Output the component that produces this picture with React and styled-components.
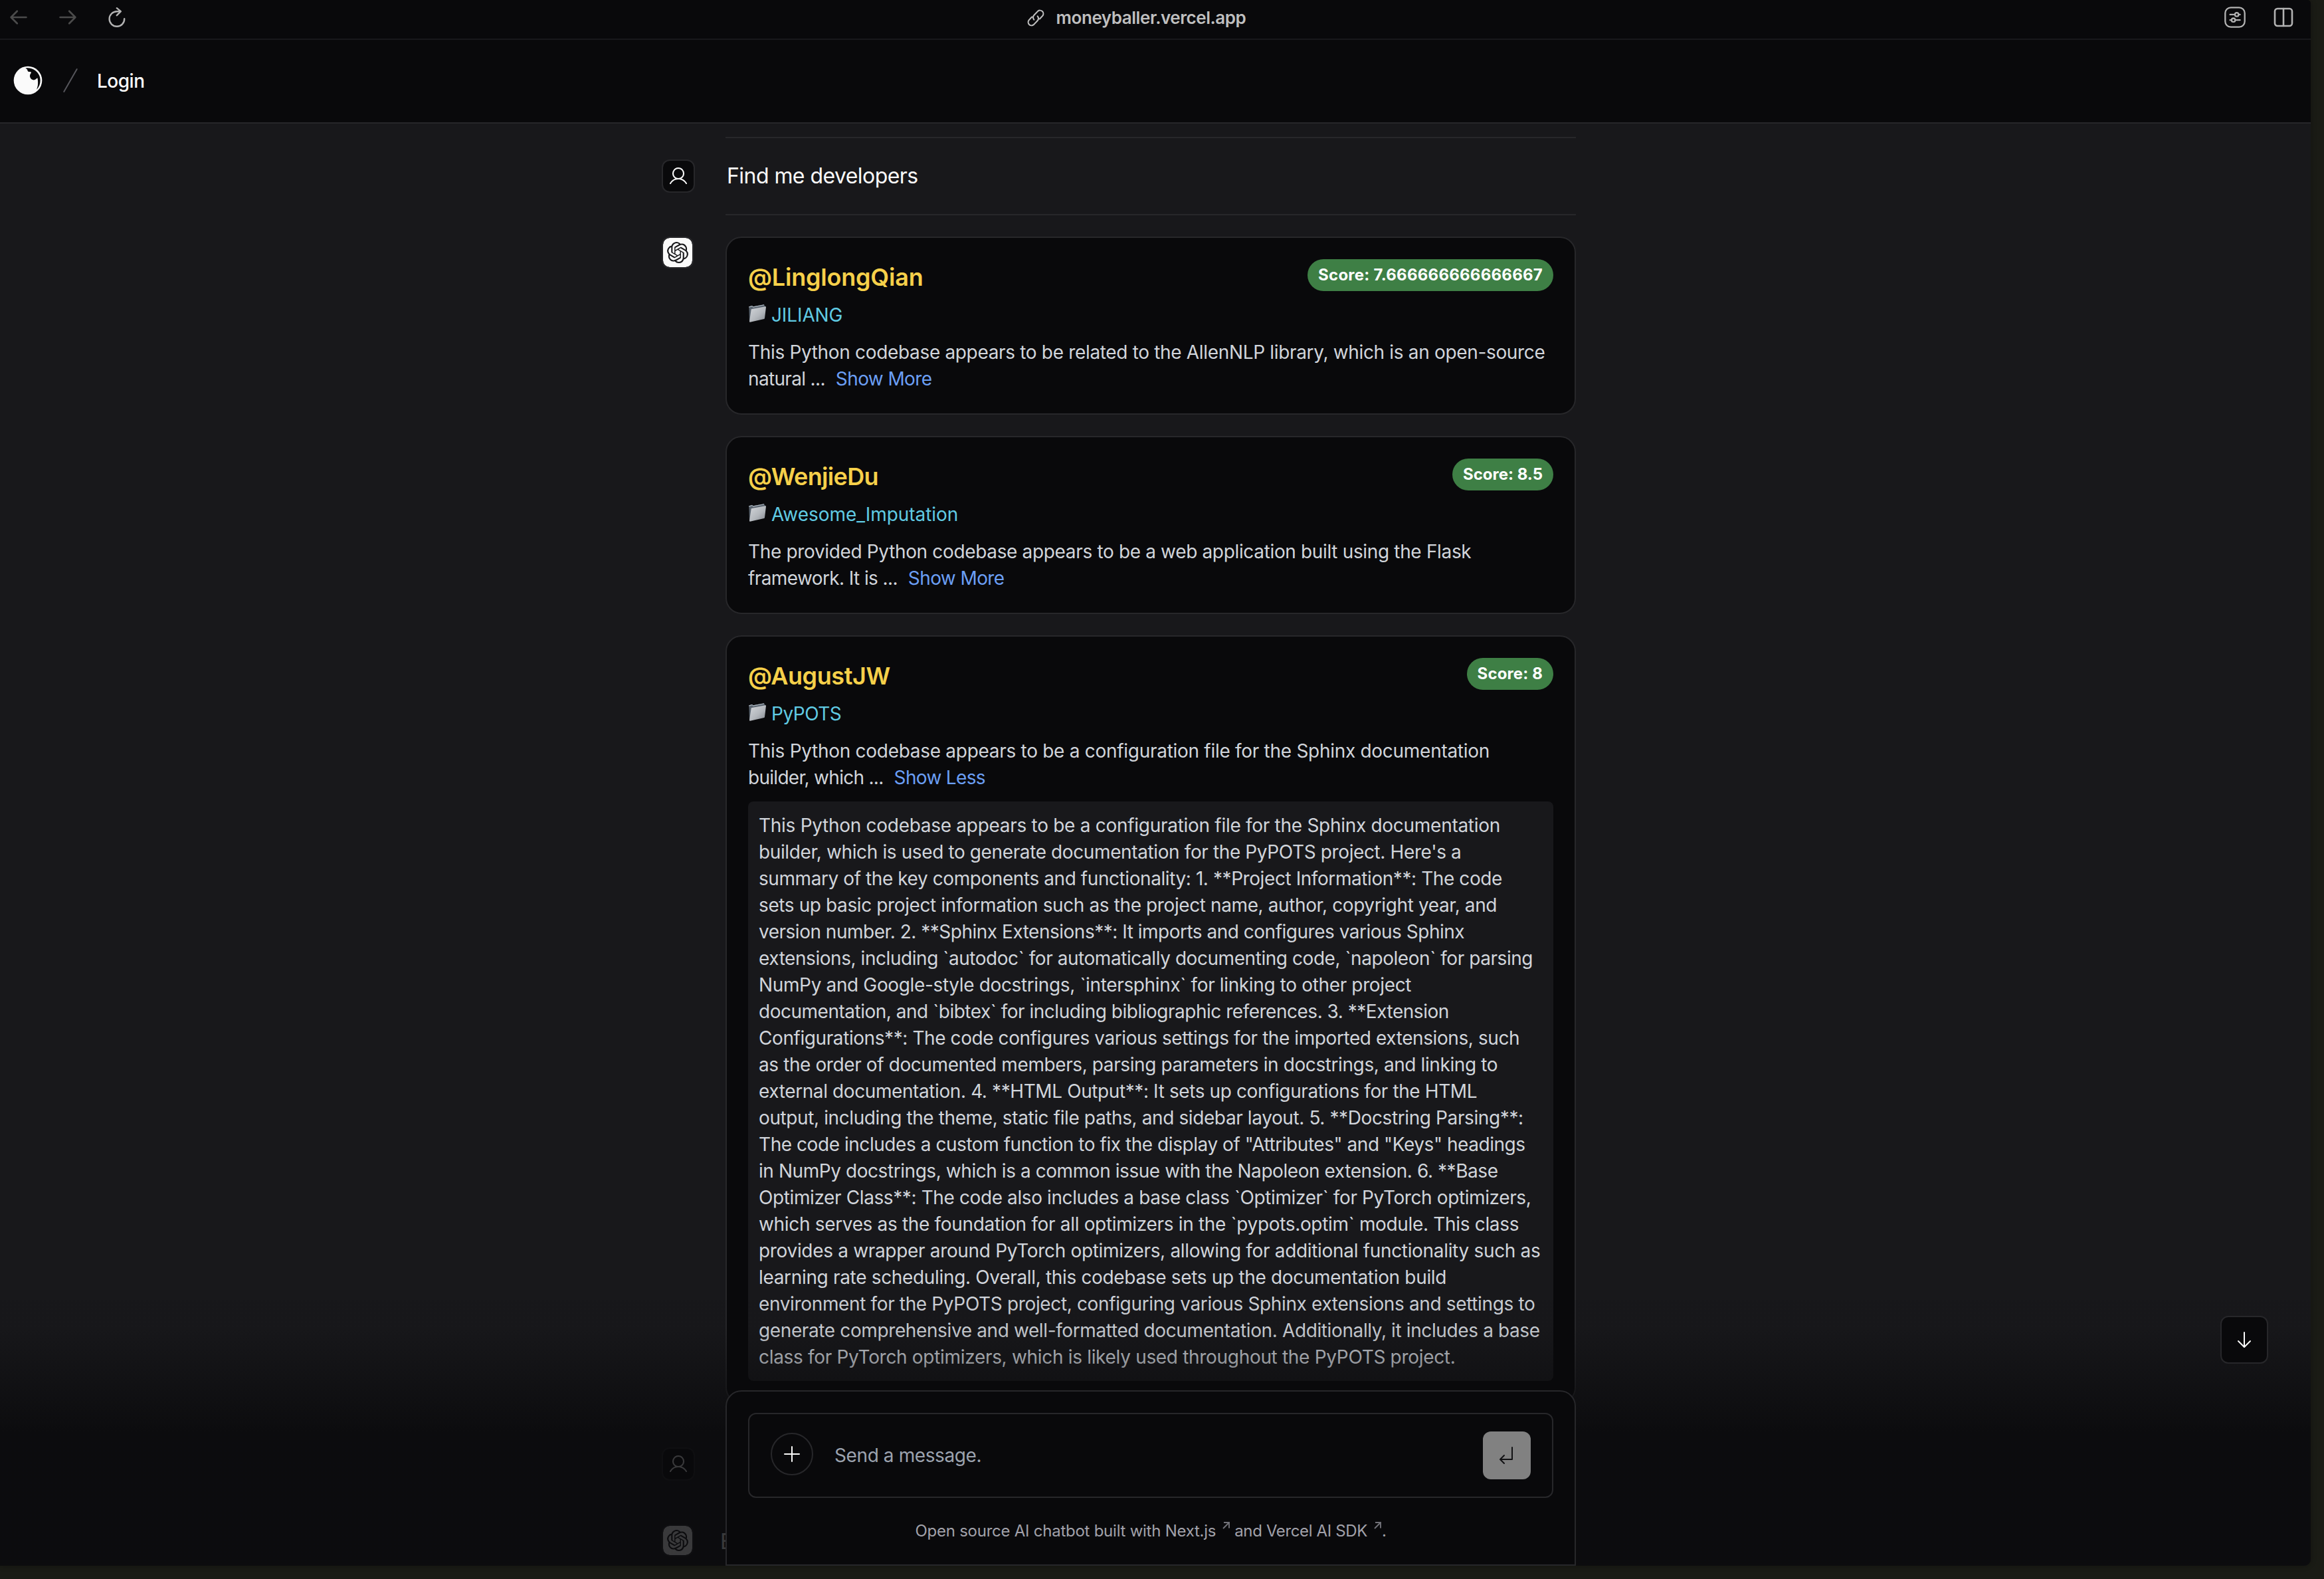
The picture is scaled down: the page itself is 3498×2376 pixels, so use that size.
import React from 'react';
import styled, { createGlobalStyle } from 'styled-components';

const GlobalStyle = createGlobalStyle`
  * {
    box-sizing: border-box;
  }
  body {
    margin: 0;
    background: #1a1b15;
    font-family: Inter, 'Liberation Sans', sans-serif;
    color: #fafafa;
  }
`

const Desktop = styled.div`
  width: 3498px;
  height: 2376px;
  overflow: hidden;
  background: #1a1b15;
`

const Window = styled.div`
  display: flex;
  flex-direction: column;
  width: 3478px;
  height: 2356px;
  overflow: hidden;
  background: #09090b;
  border-radius: 0 5px 10px 0;
  box-shadow: 0 0 8px rgba(0, 0, 0, 0.3);
`

/* browser bar */

const Toolbar = styled.div`
  display: grid;
  grid-template-columns: 1fr auto 1fr;
  flex: none;
  height: 60px;
  padding: 0 26px 6px 12px;
  border-bottom: 2px solid #18181b;
  color: #b3b3b3;
`

const ToolGroup = styled.div`
  display: flex;
  align-items: center;
  justify-content: ${(p) => (p.$end ? 'flex-end' : 'flex-start')};
  gap: ${(p) => p.$gap}px;
`

const Address = styled.div`
  display: flex;
  align-items: center;
  gap: 17px;
  margin-right: 44px;
  padding-top: 1px;
  font-size: 26px;
  font-weight: 600;
  letter-spacing: -0.45px;
  color: #bfbfbf;
`

const Icon = styled.svg`
  display: block;
  flex: none;
  width: ${(p) => p.$size || 32}px;
  height: ${(p) => p.$size || 32}px;
  color: ${(p) => p.$color || 'inherit'};
`

/* site header */

const Header = styled.header`
  display: flex;
  align-items: center;
  flex: none;
  height: 126px;
  padding: 0 18px 2px;
  border-bottom: 2px solid #27272a;
`

const SlashHolder = styled.span`
  margin-left: 16px;
`

const LoginLink = styled.a`
  padding: 1px 0 0 16px;
  font-size: 28px;
  font-weight: 500;
  letter-spacing: -0.5px;
`

const Separator = styled.div`
  height: 2px;
  margin-left: 96px;
  background: #27272a;
`

/* chat */

const Chat = styled.main`
  position: relative;
  flex: 1;
  overflow: hidden;
  background: #18181b;
`

const Column = styled.div`
  width: 2372px;
  padding: 20px 0 0 996px;
`

const Message = styled.div`
  display: flex;
  align-items: flex-start;
  padding: 32px 0;
`

const Avatar = styled.div`
  display: flex;
  align-items: center;
  justify-content: center;
  flex: none;
  width: ${(p) => (p.$bot ? 48 : 50)}px;
  height: ${(p) => (p.$bot ? 48 : 50)}px;
  border: 2px solid #27272a;
  border-radius: 12px;
  background: ${(p) => (p.$bot ? '#fafafa' : '#09090b')};
  background-clip: padding-box;
  color: ${(p) => (p.$bot ? '#18181b' : '#fafafa')};
`

const Prompt = styled.p`
  height: 50px;
  margin: 0 0 0 48px;
  font-size: 32px;
  line-height: 49px;
  letter-spacing: -0.55px;
`

const Reply = styled.p`
  margin: 0 0 0 40px;
  font-size: 32px;
  line-height: 52px;
  letter-spacing: -0.45px;
`

const Cards = styled.div`
  display: flex;
  flex-direction: column;
  gap: 32px;
  width: 1280px;
  margin-left: 48px;
`

const Card = styled.article`
  display: flex;
  flex-direction: column;
  padding: 32px;
  border: 2px solid #27272a;
  border-radius: 24px;
  background: #09090b;
  font-size: 28px;
  line-height: 40px;
`

const CardHead = styled.div`
  display: flex;
  align-items: flex-start;
  justify-content: space-between;
  height: 64px;
`

const Name = styled.h3`
  margin: 0;
  font-size: 36px;
  font-weight: 600;
  line-height: 54px;
  letter-spacing: ${(p) => p.$ls}px;
  color: #f6d04a;
`

const Badge = styled.span`
  padding: 0 16px;
  border-radius: 24px;
  background: #3e7f45;
  color: #fff;
  font-size: 24px;
  font-weight: 700;
  line-height: 48px;
  letter-spacing: ${(p) => p.$ls}px;
`

const Repo = styled.a`
  display: flex;
  gap: 7px;
  height: 40px;
  margin-bottom: 16px;
  line-height: 41px;
  letter-spacing: ${(p) => p.$ls}px;
  color: #60cbe3;
`

const FolderArt = styled(Icon)`
  margin-top: 4px;
`

const Line = styled.span`
  display: block;
  height: 40px;
  line-height: 41px;
  white-space: pre;
  letter-spacing: ${(p) => p.$ls}px;
  color: #d1d5db;
`

const Toggle = styled.a`
  margin-left: 16px;
  letter-spacing: ${(p) => p.$ls}px;
  color: #6b9ff5;
`

const Detail = styled.div`
  margin-top: 16px;
  padding: 16px;
  border-radius: 8px;
  background: #18181b;
`

/* composer that sits over the end of the chat */

const Footer = styled.div`
  position: absolute;
  right: 0;
  bottom: 0;
  left: 0;
  display: flex;
  align-items: flex-end;
  height: 400px;
  padding-left: 1092px;
  background: linear-gradient(to bottom, rgba(9, 9, 11, 0.05) 10%, rgba(9, 9, 11, 0.8) 50%);
`

const Composer = styled.div`
  display: flex;
  flex-direction: column;
  width: 1280px;
  height: 264px;
  padding: 32px;
  border: 2px solid #27272a;
  border-radius: 24px 24px 0 0;
  background: #09090b;
`

const Form = styled.form`
  display: flex;
  flex: none;
  align-items: center;
  height: 128px;
  padding: 0 32px;
  border: 2px solid #27272a;
  border-radius: 12px;
`

const RoundButton = styled.button`
  display: flex;
  align-items: center;
  justify-content: center;
  width: 64px;
  height: 64px;
  margin-bottom: 4px;
  padding: 0;
  border: 2px solid #27272a;
  border-radius: 50%;
  background: #09090b;
  color: #fafafa;
`

const Placeholder = styled.span`
  flex: 1;
  margin-left: 32px;
  font-size: 28px;
  line-height: 40px;
  letter-spacing: -0.4px;
  color: #9ca3af;
`

const SendButton = styled.button`
  display: flex;
  align-items: center;
  justify-content: center;
  width: 72px;
  height: 72px;
  padding: 0;
  border: 0;
  border-radius: 12px;
  background: #818181;
  color: #111113;
`

const Credits = styled.p`
  display: flex;
  justify-content: center;
  height: 32px;
  margin: 32px 0 0;
  font-size: 24px;
  line-height: 36px;
  white-space: pre;
  letter-spacing: -0.3px;
  color: #a1a1aa;
`

const Credit = styled.a`
  display: flex;
  gap: 10px;
  letter-spacing: ${(p) => p.$ls}px;
`

const CreditArrow = styled(Icon)`
  margin: 4px ${(p) => p.$after}px 0 0;
  color: #717178;
`

const ScrollButton = styled.button`
  position: absolute;
  right: 64px;
  bottom: 304px;
  display: flex;
  align-items: center;
  justify-content: center;
  width: 72px;
  height: 72px;
  padding: 0;
  border: 2px solid #27272a;
  border-radius: 12px;
  background: #09090b;
  color: #fafafa;
`

const stroke = {
  fill: 'none',
  stroke: 'currentColor',
  strokeLinecap: 'round',
  strokeLinejoin: 'round',
}

const BackIcon = () => (
  <Icon viewBox="0 0 32 32" $color="#4b4b4b" {...stroke} strokeWidth="2.7">
    <path d="M27.4 16H5M13.8 6.8L4.6 16l9.2 9.2" />
  </Icon>
)

const ForwardIcon = () => (
  <Icon viewBox="0 0 32 32" $color="#4b4b4b" {...stroke} strokeWidth="2.7">
    <path d="M4.6 16H27M18.2 6.8l9.2 9.2-9.2 9.2" />
  </Icon>
)

const ReloadIcon = () => (
  <Icon viewBox="0 0 32 32" {...stroke} strokeWidth="2.4">
    <path d="M27.2 18.2A11.3 11.3 0 1 1 16 7.2h5.2" />
    <path d="M15.8 2.2l6 5-6 6" />
  </Icon>
)

const LinkIcon = () => (
  <Icon viewBox="0 0 28 28" $size={28} {...stroke} strokeWidth="2.1">
    <path d="M11.3 16.6a5.2 5.2 0 0 1 .2-6.8l5.6-5.9a5 5 0 0 1 7.1 7l-4.3 4.6" />
    <path d="M16.7 11.4a5.2 5.2 0 0 1-.2 6.8l-5.6 5.9a5 5 0 0 1-7.1-7l4.3-4.6" />
  </Icon>
)

const SettingsIcon = () => (
  <Icon viewBox="0 0 32 32" {...stroke} strokeWidth="2.3">
    <rect x="1.3" y="1.3" width="29.4" height="29.4" rx="8.5" />
    <path d="M8.6 11.9h7.2M21.8 11.9h1.8M8.6 20.2h1.8M16.6 20.2h7" />
    <circle cx="18.7" cy="11.9" r="2.7" />
    <circle cx="13.6" cy="20.2" r="2.7" />
  </Icon>
)

const SplitIcon = () => (
  <Icon viewBox="0 0 30 30" $size={30} {...stroke} strokeWidth="2.6">
    <rect x="2" y="2" width="26" height="26" rx="4" />
    <path d="M15 2v26" />
  </Icon>
)

const Logo = () => (
  <Icon viewBox="0 0 144 144" $size={48}>
    <circle cx="72" cy="72" r="64" fill="#fafafa" />
    <path
      d="M61 17c14-3 32 1 45 11 14 11 22 26 22 44 0 16-5 29-16 41 1-8 5-14 5-23 1-11 0-21-2-29-5 3-8 8-14 9-9 1-16-4-19-12-2-7-1-13 4-19 2-4-1-6-5-6-6 1-10-2-11-7-1-4-2-6-9-9Z"
      fill="#09090b"
    />
  </Icon>
)

const SlashIcon = () => (
  <Icon viewBox="0 0 24 24" $size={48} $color="#55555b" {...stroke}>
    <path d="M16.88 3.549L7.12 20.451" />
  </Icon>
)

const UserIcon = () => (
  <Icon viewBox="0 0 256 256" fill="currentColor">
    <path d="M230.92 212c-15.23-26.33-38.7-45.21-66.09-54.16a72 72 0 1 0-73.66 0c-27.39 8.94-50.86 27.82-66.09 54.16a8 8 0 1 0 13.85 8c18.84-32.56 52.14-52 89.07-52s70.23 19.44 89.07 52a8 8 0 1 0 13.85-8ZM72 96a56 56 0 1 1 56 56 56.06 56.06 0 0 1-56-56Z" />
  </Icon>
)

const OpenAIIcon = () => (
  <Icon viewBox="0 0 24 24" fill="currentColor">
    <path d="M22.2819 9.8211a5.9847 5.9847 0 0 0-.5157-4.9108 6.0462 6.0462 0 0 0-6.5098-2.9A6.0651 6.0651 0 0 0 4.9807 4.1818a5.9847 5.9847 0 0 0-3.9977 2.9 6.0462 6.0462 0 0 0 .7427 7.0966 5.98 5.98 0 0 0 .511 4.9107 6.051 6.051 0 0 0 6.5146 2.9001A5.9847 5.9847 0 0 0 13.2599 24a6.0557 6.0557 0 0 0 5.7718-4.2058 5.9894 5.9894 0 0 0 3.9977-2.9001 6.0557 6.0557 0 0 0-.7475-7.0729zm-9.022 12.6081a4.4755 4.4755 0 0 1-2.8764-1.0408l.1419-.0804 4.7783-2.7582a.7948.7948 0 0 0 .3927-.6813v-6.7369l2.02 1.1686a.071.071 0 0 1 .038.052v5.5826a4.504 4.504 0 0 1-4.4945 4.4944zm-9.6607-4.1254a4.4708 4.4708 0 0 1-.5346-3.0137l.142.0852 4.783 2.7582a.7712.7712 0 0 0 .7806 0l5.8428-3.3685v2.3324a.0804.0804 0 0 1-.0332.0615L9.74 19.9502a4.4992 4.4992 0 0 1-6.1408-1.6464zM2.3408 7.8956a4.485 4.485 0 0 1 2.3655-1.9728V11.6a.7664.7664 0 0 0 .3879.6765l5.8144 3.3543-2.0201 1.1685a.0757.0757 0 0 1-.071 0l-4.8303-2.7865A4.504 4.504 0 0 1 2.3408 7.872zm16.5963 3.8558L13.1038 8.364 15.1192 7.2a.0757.0757 0 0 1 .071 0l4.8303 2.7913a4.4944 4.4944 0 0 1-.6765 8.1042v-5.6772a.79.79 0 0 0-.407-.667zm2.0107-3.0231l-.142-.0852-4.7735-2.7818a.7759.7759 0 0 0-.7854 0L9.409 9.2297V6.8974a.0662.0662 0 0 1 .0284-.0615l4.8303-2.7866a4.4992 4.4992 0 0 1 6.6802 4.66zM8.3065 12.863l-2.02-1.1638a.0804.0804 0 0 1-.038-.0567V6.0742a4.4992 4.4992 0 0 1 7.3757-3.4537l-.142.0805L8.704 5.459a.7948.7948 0 0 0-.3927.6813zm1.0976-2.3654l2.602-1.4998 2.6069 1.4998v2.9994l-2.5974 1.4997-2.6067-1.4997Z" />
  </Icon>
)

const PlusIcon = () => (
  <Icon viewBox="0 0 256 256" fill="currentColor">
    <path d="M224 128a8 8 0 0 1-8 8h-80v80a8 8 0 0 1-16 0v-80H40a8 8 0 0 1 0-16h80V40a8 8 0 0 1 16 0v80h80a8 8 0 0 1 8 8Z" />
  </Icon>
)

const EnterIcon = () => (
  <Icon viewBox="0 0 256 256" fill="currentColor">
    <path d="M200 32v144a8 8 0 0 1-8 8H67.31l34.35 34.34a8 8 0 0 1-11.32 11.32l-48-48a8 8 0 0 1 0-11.32l48-48a8 8 0 0 1 11.32 11.32L67.31 168H184V32a8 8 0 0 1 16 0Z" />
  </Icon>
)

const DownIcon = () => (
  <Icon viewBox="0 0 256 256" fill="currentColor">
    <path d="m205.66 149.66-72 72a8 8 0 0 1-11.32 0l-72-72a8 8 0 0 1 11.32-11.32L120 196.69V40a8 8 0 0 1 16 0v156.69l58.34-58.35a8 8 0 0 1 11.32 11.32Z" />
  </Icon>
)

const ExternalArrow = ({ after }) => (
  <CreditArrow viewBox="0 0 11 11" $size={11} $after={after} fill="none" stroke="currentColor" strokeWidth="1.9">
    <path d="M2 1h8v8.5M10 1L1 10" />
  </CreditArrow>
)

const FolderIcon = () => (
  <FolderArt viewBox="0 0 78 84" $size={28}>
    <defs>
      <linearGradient id="folderFront" x1="0" y1="0" x2="1" y2="1">
        <stop offset="0" stopColor="#d3d6da" />
        <stop offset="0.55" stopColor="#b4b8bd" />
        <stop offset="1" stopColor="#83888f" />
      </linearGradient>
    </defs>
    <path d="M1 10l14-4 5 4 49-9 2 5 5 3-6 54L3 79Z" fill="#59636e" />
    <path d="M1 10l14-4 5 4 49-9 1 3-50 10-5-4-14 4Z" fill="#a7b1ba" />
    <path d="M11 24c0-2 1-3 3-3L75 10c2 0 3 1 3 2l-6 50c0 2-1 3-3 4L6 80c-2 0-3-1-3-3Z" fill="url(#folderFront)" />
  </FolderArt>
)

const developers = [
  {
    name: '@LinglongQian',
    nameLs: -0.2,
    score: 'Score: 7.666666666666667',
    scoreLs: 0.239,
    repo: 'JILIANG',
    repoLs: -0.11,
    first: ['This Python codebase appears to be related to the AllenNLP library, which is an open-source', -0.332],
    second: ['natural ...', -0.664],
    toggle: ['Show More', -0.6],
  },
  {
    name: '@WenjieDu',
    nameLs: -0.64,
    score: 'Score: 8.5',
    scoreLs: 0,
    repo: 'Awesome_Imputation',
    repoLs: -0.058,
    first: ['The provided Python codebase appears to be a web application built using the Flask', -0.345],
    second: ['framework. It is ...', -0.61],
    toggle: ['Show More', -0.6],
  },
  {
    name: '@AugustJW',
    nameLs: -0.4,
    score: 'Score: 8',
    scoreLs: 0.137,
    repo: 'PyPOTS',
    repoLs: -0.5,
    first: ['This Python codebase appears to be a configuration file for the Sphinx documentation', -0.288],
    second: ['builder, which ...', -0.71],
    toggle: ['Show Less', -0.66],
    detail: [
      ['This Python codebase appears to be a configuration file for the Sphinx documentation', -0.288],
      ["builder, which is used to generate documentation for the PyPOTS project. Here's a", -0.384],
      ['summary of the key components and functionality: 1. **Project Information**: The code', -0.424],
      ['sets up basic project information such as the project name, author, copyright year, and', -0.391],
      ['version number. 2. **Sphinx Extensions**: It imports and configures various Sphinx', -0.494],
      ['extensions, including `autodoc` for automatically documenting code, `napoleon` for parsing', -0.444],
      ['NumPy and Google-style docstrings, `intersphinx` for linking to other project', -0.359],
      ['documentation, and `bibtex` for including bibliographic references. 3. **Extension', -0.486],
      ['Configurations**: The code configures various settings for the imported extensions, such', -0.42],
      ['as the order of documented members, parsing parameters in docstrings, and linking to', -0.402],
      ['external documentation. 4. **HTML Output**: It sets up configurations for the HTML', -0.401],
      ['output, including the theme, static file paths, and sidebar layout. 5. **Docstring Parsing**:', -0.393],
      ['The code includes a custom function to fix the display of "Attributes" and "Keys" headings', -0.447],
      ['in NumPy docstrings, which is a common issue with the Napoleon extension. 6. **Base', -0.436],
      ['Optimizer Class**: The code also includes a base class `Optimizer` for PyTorch optimizers,', -0.392],
      ['which serves as the foundation for all optimizers in the `pypots.optim` module. This class', -0.332],
      ['provides a wrapper around PyTorch optimizers, allowing for additional functionality such as', -0.324],
      ['learning rate scheduling. Overall, this codebase sets up the documentation build', -0.333],
      ['environment for the PyPOTS project, configuring various Sphinx extensions and settings to', -0.358],
      ['generate comprehensive and well-formatted documentation. Additionally, it includes a base', -0.383],
      ['class for PyTorch optimizers, which is likely used throughout the PyPOTS project.', -0.315],
    ],
  },
]

const DeveloperCard = ({ dev }) => (
  <Card>
    <CardHead>
      <Name $ls={dev.nameLs}>{dev.name}</Name>
      <Badge $ls={dev.scoreLs}>{dev.score}</Badge>
    </CardHead>
    <Repo $ls={dev.repoLs}>
      <FolderIcon />
      {dev.repo}
    </Repo>
    <Line $ls={dev.first[1]}>{dev.first[0]}</Line>
    <Line $ls={dev.second[1]}>
      {dev.second[0]}
      <Toggle $ls={dev.toggle[1]}>{dev.toggle[0]}</Toggle>
    </Line>
    {dev.detail && (
      <Detail>
        {dev.detail.map(([text, ls]) => (
          <Line key={text} $ls={ls}>{text}</Line>
        ))}
      </Detail>
    )}
  </Card>
)

const App = () => {
  return (
    <Desktop>
      <GlobalStyle />
      <Window>
        <Toolbar>
          <ToolGroup $gap={42}>
            <BackIcon />
            <ForwardIcon />
            <ReloadIcon />
          </ToolGroup>
          <Address>
            <LinkIcon />
            moneyballer.vercel.app
          </Address>
          <ToolGroup $end $gap={42}>
            <SettingsIcon />
            <SplitIcon />
          </ToolGroup>
        </Toolbar>

        <Header>
          <Logo />
          <SlashHolder>
            <SlashIcon />
          </SlashHolder>
          <LoginLink>Login</LoginLink>
        </Header>

        <Chat>
          <Column>
            <Separator />
            <Message>
              <Avatar>
                <UserIcon />
              </Avatar>
              <Prompt>Find me developers</Prompt>
            </Message>
            <Separator />
            <Message>
              <Avatar $bot>
                <OpenAIIcon />
              </Avatar>
              <Cards>
                {developers.map((dev) => (
                  <DeveloperCard key={dev.name} dev={dev} />
                ))}
              </Cards>
            </Message>
            <Separator />
            <Message>
              <Avatar>
                <UserIcon />
              </Avatar>
            </Message>
            <Separator />
            <Message>
              <Avatar $bot>
                <OpenAIIcon />
              </Avatar>
              <Reply>E</Reply>
            </Message>
          </Column>

          <Footer>
            <Composer>
              <Form>
                <RoundButton type="button">
                  <PlusIcon />
                </RoundButton>
                <Placeholder>Send a message.</Placeholder>
                <SendButton type="button">
                  <EnterIcon />
                </SendButton>
              </Form>
              <Credits>
                <Credit $ls={-0.249}>
                  Open source AI chatbot built with Next.js
                  <ExternalArrow after={7} />
                </Credit>
                <Credit $ls={-0.369}>
                  and Vercel AI SDK
                  <ExternalArrow after={1} />
                </Credit>
                .
              </Credits>
            </Composer>
          </Footer>

          <ScrollButton>
            <DownIcon />
          </ScrollButton>
        </Chat>
      </Window>
    </Desktop>
  );
};

export default App;
